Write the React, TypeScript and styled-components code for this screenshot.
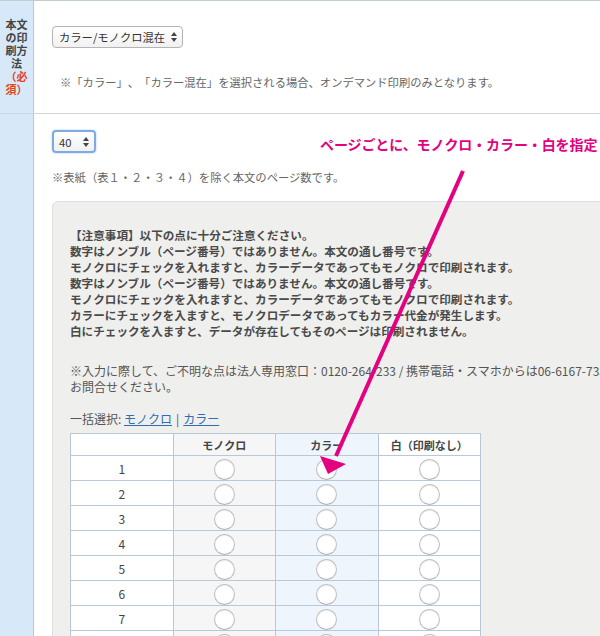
import React from 'react'
import styled, { createGlobalStyle } from 'styled-components'

const GlobalStyle = createGlobalStyle`
	html, body {
		margin: 0;
		padding: 0;
		background: #fff;
	}
	body {
		font-family: 'Noto Sans CJK JP', 'Noto Sans', sans-serif;
		color: #555;
		overflow: hidden;
		text-spacing-trim: space-all;
	}
`

const Page = styled.div`
	position: relative;
	width: 600px;
	height: 636px;
	overflow: hidden;
	border-top: 1px solid #c3cbd3;
	box-sizing: border-box;
`

const Row = styled.div<{ $fill?: boolean }>`
	display: flex;
	border-bottom: ${({ $fill }) => ($fill ? 'none' : '1px solid #cdd5dd')};
	min-height: ${({ $fill }) => ($fill ? '560px' : '112px')};
`

const LabelCell = styled.div`
	width: 34px;
	flex: none;
	box-sizing: border-box;
	padding: 0 6px;
	background: #d7e8f8;
	border-right: 1px solid #b7c8d8;
	display: flex;
	align-items: center;
	justify-content: center;
	text-align: center;
	font-size: 11px;
	line-height: 13px;
	font-weight: bold;
	color: #444;
`

const Required = styled.span`
	color: #e4441d;
`

const ContentCell = styled.div<{ $top: number }>`
	flex: 1;
	min-width: 0;
	padding: ${({ $top }) => $top}px 0 0 18px;
`

const SelectBox = styled.div<{ $focus?: boolean }>`
	display: inline-flex;
	align-items: center;
	gap: 6px;
	box-sizing: border-box;
	height: ${({ $focus }) => ($focus ? '23px' : '22px')};
	padding: 0 5px 0 ${({ $focus }) => ($focus ? '5px' : '6px')};
	border: ${({ $focus }) => ($focus ? '2px solid #7eabe6' : '1px solid #b4b4b4')};
	border-radius: 4px;
	background: linear-gradient(#ffffff, #f1f1f1);
	box-shadow: ${({ $focus }) => ($focus ? '0 0 2px #9cc1ee' : 'none')};
	font-size: 11.3px;
	color: #333;
	vertical-align: top;
`

const Spinner = styled.svg`
	width: 6px;
	height: 10px;
	fill: #444;
`

const Note = styled.p<{ $indent?: number; $top: number }>`
	margin: ${({ $top }) => $top}px 0 0 ${({ $indent }) => $indent ?? 0}px;
	font-size: 11.3px;
	line-height: 16px;
	color: #666;
	white-space: nowrap;
`

const InfoBox = styled.div`
	margin-top: 16px;
	width: 640px;
	min-height: 460px;
	box-sizing: border-box;
	padding: 25px 0 0 17px;
	background: #efefee;
	border: 1px solid #dedede;
	border-radius: 6px 0 0 0;
`

const Notice = styled.p`
	margin: 0;
	font-size: 11.6px;
	line-height: 16px;
	font-weight: bold;
	color: #4a4a4a;
	white-space: nowrap;
`

const Contact = styled.p`
	margin: 24px 0 0;
	font-size: 12px;
	line-height: 16px;
	color: #555;
	white-space: nowrap;
`

const BulkSelect = styled.div`
	margin-top: 16px;
	font-size: 12px;
	line-height: 16px;
	color: #555;
`

const BulkLink = styled.a`
	color: #2f6cb5;
	text-decoration: underline;
	cursor: pointer;
`

const Divider = styled.span`
	margin: 0 4px;
`

const PageTable = styled.table`
	margin-top: 6px;
	border-collapse: collapse;
	width: 411px;
	table-layout: fixed;
	background: #fff;
	font-size: 12px;
	color: #444;
`

const HeadCell = styled.th<{ $bg: string }>`
	height: 21px;
	padding: 0;
	border: 1px solid #b9c8d7;
	background: ${({ $bg }) => $bg};
	font-weight: bold;
	font-size: 11px;
	color: #444;
`

const Cell = styled.td<{ $bg: string }>`
	height: 24px;
	padding: 0;
	border: 1px solid #b9c8d7;
	background: ${({ $bg }) => $bg};
	text-align: center;
	vertical-align: middle;
`

const Radio = styled.span`
	display: inline-block;
	width: 19px;
	height: 19px;
	margin-top: 3px;
	border-radius: 50%;
	border: 1px solid #bdbdbd;
	border-bottom-color: #b0b0b0;
	background: radial-gradient(circle at 50% 40%, #ffffff 60%, #ececec 100%);
	box-shadow: inset 0 1px 1px rgba(0, 0, 0, 0.06);
	vertical-align: middle;
`

const Annotation = styled.div`
	position: absolute;
	left: 320px;
	top: 134px;
	font-size: 14px;
	line-height: 18px;
	font-weight: bold;
	color: #e4007f;
	white-space: nowrap;
	letter-spacing: -0.1px;
`

const ArrowLayer = styled.svg`
	position: absolute;
	left: 0;
	top: 0;
	pointer-events: none;
`

const columns = [
	{ label: '', bg: '#ffffff' },
	{ label: 'モノクロ', bg: '#f6f6f6' },
	{ label: 'カラー', bg: '#eff5fd' },
	{ label: '白（印刷なし）', bg: '#ffffff' },
]

const pages = [1, 2, 3, 4, 5, 6, 7, 8, 9, 10]

const App = () => (
	<>
		<GlobalStyle />
		<Page>
			<Row>
				<LabelCell>
					<span>
						本文の印刷方法<Required>（必須）</Required>
					</span>
				</LabelCell>
				<ContentCell $top={25}>
					<SelectBox>
						カラー/モノクロ混在
						<Spinner viewBox="0 0 6 10">
							<polygon points="0,4 3,0 6,4" />
							<polygon points="0,6 3,10 6,6" />
						</Spinner>
					</SelectBox>
					<Note $top={24} $indent={8}>
						※「カラー」、「カラー混在」を選択される場合、オンデマンド印刷のみとなります。
					</Note>
				</ContentCell>
			</Row>
			<Row $fill>
				<LabelCell />
				<ContentCell $top={16}>
					<SelectBox $focus>
						40&nbsp;&nbsp;
						<Spinner viewBox="0 0 6 10">
							<polygon points="0,4 3,0 6,4" />
							<polygon points="0,6 3,10 6,6" />
						</Spinner>
					</SelectBox>
					<Note $top={15}>※表紙（表１・２・３・４）を除く本文のページ数です。</Note>
					<InfoBox>
						<Notice>
							【注意事項】以下の点に十分ご注意ください。
							<br />
							数字はノンブル（ページ番号）ではありません。本文の通し番号です。
							<br />
							モノクロにチェックを入れますと、カラーデータであってもモノクロで印刷されます。
							<br />
							数字はノンブル（ページ番号）ではありません。本文の通し番号です。
							<br />
							モノクロにチェックを入れますと、カラーデータであってもモノクロで印刷されます。
							<br />
							カラーにチェックを入ますと、モノクロデータであってもカラー代金が発生します。
							<br />
							白にチェックを入ますと、データが存在してもそのページは印刷されません。
						</Notice>
						<Contact>
							※入力に際して、ご不明な点は法人専用窓口：0120-264-233 / 携帯電話・スマホからは06-6167-7331まで
							<br />
							お問合せください。
						</Contact>
						<BulkSelect>
							一括選択: <BulkLink>モノクロ</BulkLink>
							<Divider>|</Divider>
							<BulkLink>カラー</BulkLink>
						</BulkSelect>
						<PageTable>
							<thead>
								<tr>
									{columns.map((c, i) => (
										<HeadCell key={i} $bg={c.bg}>
											{c.label}
										</HeadCell>
									))}
								</tr>
							</thead>
							<tbody>
								{pages.map((n) => (
									<tr key={n}>
										<Cell $bg="#ffffff">{n}</Cell>
										{columns.slice(1).map((c, i) => (
											<Cell key={i} $bg={c.bg}>
												<Radio />
											</Cell>
										))}
									</tr>
								))}
							</tbody>
						</PageTable>
					</InfoBox>
				</ContentCell>
			</Row>
			<Annotation>ページごとに、モノクロ・カラー・白を指定</Annotation>
			<ArrowLayer width="600" height="636" viewBox="0 0 600 636">
				<line x1="463" y1="170" x2="336" y2="455" stroke="#e4007f" strokeWidth="4" />
				<polygon points="320,455 346,463 328,473" fill="#e4007f" />
			</ArrowLayer>
		</Page>
	</>
)

export default App
